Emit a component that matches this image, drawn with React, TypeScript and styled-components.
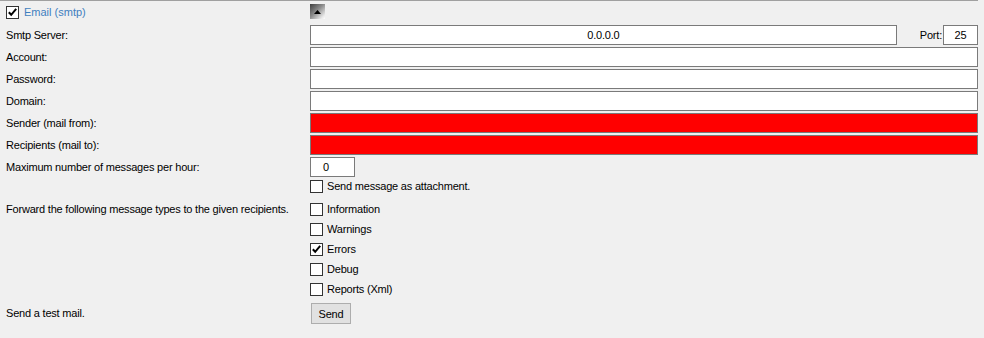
import React from "react";
import styled, { createGlobalStyle } from "styled-components";

const Global = createGlobalStyle`
  html, body { margin: 0; padding: 0; background: #f0f0f0; }
  body {
    font-family: "Liberation Sans", Arial, sans-serif;
    font-size: 11px;
    letter-spacing: -0.2px;
    color: #000;
  }
`;

const Panel = styled.div`
  width: 978px;
  border-top: 1px solid #a0a0a0;
  box-sizing: border-box;
`;

const Header = styled.div`
  display: grid;
  grid-template-columns: 310px 1fr;
  height: 24px;
`;

const HeaderLeft = styled.div`
  display: flex;
  align-items: center;
  padding: 5px 0 0 6px;
  height: 13px;
`;

const HeaderTitle = styled.span`
  color: #3f7fbf;
  margin-left: 5px;
  line-height: 13px;
  font-size: 11px;
  letter-spacing: 0;
`;

const HeaderRight = styled.div`
  padding-top: 3px;
`;

const CollapseButton = styled.div`
  width: 15px;
  height: 15px;
  box-sizing: border-box;
  background: linear-gradient(135deg, #3e3e3e 0%, #8a8a8a 45%, #e8e8e8 85%, #ffffff 100%);
  display: flex;
  align-items: center;
  justify-content: center;
`;

const FieldRow = styled.div<{ $tight?: boolean }>`
  display: grid;
  grid-template-columns: 310px 1fr;
  height: 20px;
  margin-bottom: ${(p) => (p.$tight ? 0 : 2)}px;
  margin-top: ${(p) => (p.$tight ? -2 : 0)}px;
  align-items: center;
`;

const Label = styled.div`
  padding-left: 6px;
  line-height: 13px;
  white-space: nowrap;
`;

const TopLabel = styled(Label)`
  align-self: start;
  padding-top: 3px;
`;

const Cell = styled.div`
  display: flex;
  align-items: center;
  height: 100%;
`;

const TextBox = styled.div<{ $bg?: string; $width?: number; $align?: string; $pad?: number }>`
  box-sizing: border-box;
  height: 20px;
  border: 1px solid #7a7a7a;
  background: ${(p) => p.$bg || "#ffffff"};
  ${(p) => (p.$width ? `width: ${p.$width}px; flex: none;` : "flex: 1;")}
  display: flex;
  align-items: center;
  justify-content: ${(p) => p.$align || "flex-start"};
  padding-left: ${(p) => p.$pad || 0}px;
  font-size: 11px;
  line-height: 13px;
`;

const PortLabel = styled.span`
  margin-left: 23px;
  margin-right: 1px;
  line-height: 13px;
`;

const CheckSection = styled.div`
  display: grid;
  grid-template-columns: 310px 1fr;
  margin-top: 3px;
`;

const CheckList = styled.div`
  display: flex;
  flex-direction: column;
`;

const CheckItem = styled.label`
  display: flex;
  align-items: flex-start;
  height: 20px;
`;

const CheckItemInner = styled.span`
  display: flex;
  align-items: center;
  margin-top: 3px;
  height: 13px;
`;

const Box = styled.span`
  width: 13px;
  height: 13px;
  box-sizing: border-box;
  border: 1px solid #333333;
  background: #ffffff;
  display: inline-flex;
  flex: none;
`;

const CheckText = styled.span`
  margin-left: 4px;
  line-height: 13px;
  white-space: nowrap;
`;

const SendRow = styled.div`
  display: grid;
  grid-template-columns: 310px 1fr;
  align-items: center;
  height: 21px;
  margin-top: 3px;
`;

const Button = styled.button`
  width: 40px;
  height: 21px;
  margin-left: 1px;
  box-sizing: border-box;
  border: 1px solid #adadad;
  background: #e1e1e1;
  font-family: "Liberation Sans", Arial, sans-serif;
  font-size: 11px;
  letter-spacing: -0.2px;
  color: #000;
  padding: 0;
`;

const Check = ({ checked }: { checked?: boolean }) => (
  <Box>
    {checked && (
      <svg width="11" height="11" viewBox="0 0 11 11">
        <path d="M1.8 5.2 L4.2 7.8 L9.2 1.8" fill="none" stroke="#000" strokeWidth="2" />
      </svg>
    )}
  </Box>
);

const CheckOption = ({ text, checked }: { text: string; checked?: boolean }) => (
  <CheckItem>
    <CheckItemInner>
      <Check checked={checked} />
      <CheckText>{text}</CheckText>
    </CheckItemInner>
  </CheckItem>
);

const fields: { label: string; bg?: string }[] = [
  { label: "Account:" },
  { label: "Password:" },
  { label: "Domain:" },
  { label: "Sender (mail from):", bg: "#ff0000" },
  { label: "Recipients (mail to):", bg: "#ff0000" },
];

export default function App() {
  return (
    <>
      <Global />
      <Panel>
        <Header>
          <HeaderLeft>
            <Check checked />
            <HeaderTitle>Email (smtp)</HeaderTitle>
          </HeaderLeft>
          <HeaderRight>
            <CollapseButton>
              <svg width="7" height="4" viewBox="0 0 7 4">
                <path d="M0 4 L3.5 0 L7 4 Z" fill="#000" />
              </svg>
            </CollapseButton>
          </HeaderRight>
        </Header>

        <FieldRow>
          <Label>Smtp Server:</Label>
          <Cell>
            <TextBox $align="center">0.0.0.0</TextBox>
            <PortLabel>Port:</PortLabel>
            <TextBox $width={35} $align="center">25</TextBox>
          </Cell>
        </FieldRow>

        {fields.map((f) => (
          <FieldRow key={f.label}>
            <Label>{f.label}</Label>
            <Cell>
              <TextBox $bg={f.bg} />
            </Cell>
          </FieldRow>
        ))}

        <FieldRow>
          <Label>Maximum number of messages per hour:</Label>
          <Cell>
            <TextBox $width={45} $pad={12}>0</TextBox>
          </Cell>
        </FieldRow>

        <FieldRow $tight>
          <div />
          <CheckList>
            <CheckOption text="Send message as attachment." />
          </CheckList>
        </FieldRow>

        <CheckSection>
          <TopLabel>Forward the following message types to the given recipients.</TopLabel>
          <CheckList>
            <CheckOption text="Information" />
            <CheckOption text="Warnings" />
            <CheckOption text="Errors" checked />
            <CheckOption text="Debug" />
            <CheckOption text="Reports (Xml)" />
          </CheckList>
        </CheckSection>

        <SendRow>
          <Label>Send a test mail.</Label>
          <div>
            <Button>Send</Button>
          </div>
        </SendRow>
      </Panel>
    </>
  );
}
